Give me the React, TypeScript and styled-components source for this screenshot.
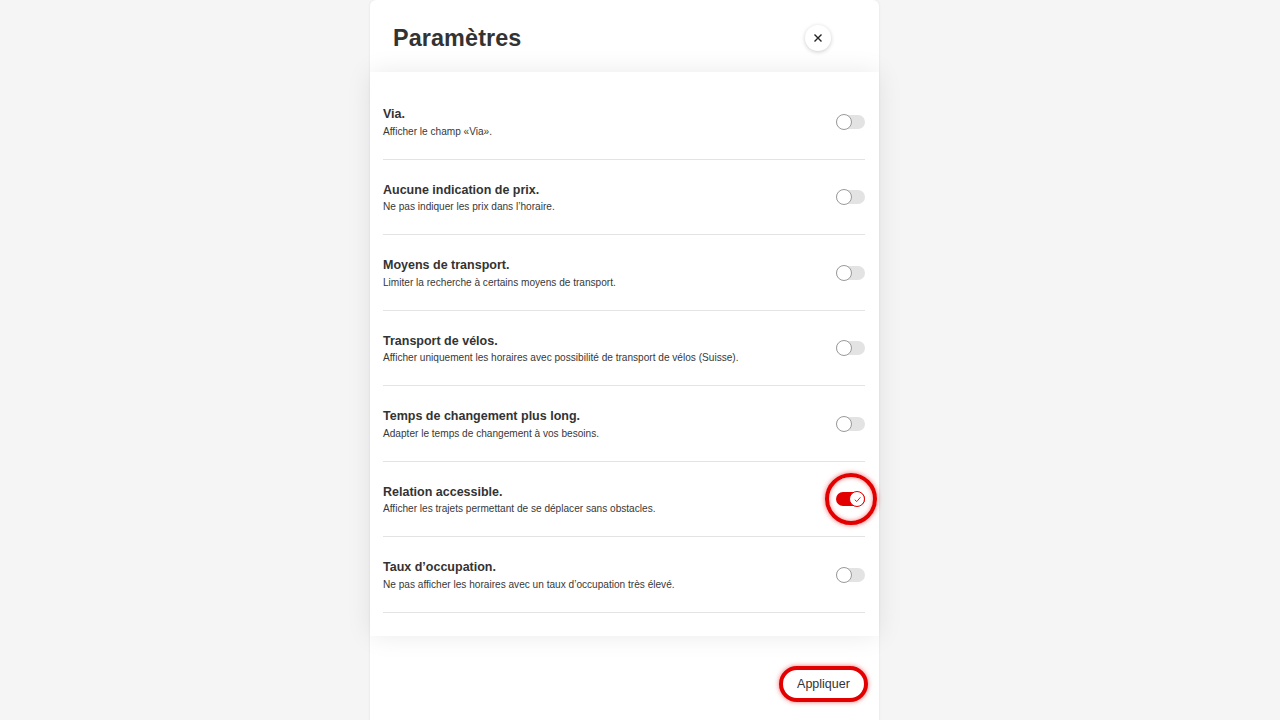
import React, { useState } from "react";
import styled, { createGlobalStyle } from "styled-components";

const GlobalStyle = createGlobalStyle`
  html, body {
    margin: 0;
    padding: 0;
    background: #f5f5f5;
    font-family: "Liberation Sans", Arial, sans-serif;
    color: #333;
  }
`;

const Page = styled.div`
  height: 720px;
  overflow: hidden;
  padding-left: 370px;
`;

const Modal = styled.div`
  width: 509px;
  height: 740px;
  background: #fff;
  border-radius: 6px;
  box-shadow: 0 0 3px rgba(0, 0, 0, 0.08);
  display: flex;
  flex-direction: column;
`;

const Header = styled.div`
  height: 72px;
  display: flex;
  align-items: center;
  justify-content: space-between;
  padding: 4px 48px 0 23px;
  box-sizing: border-box;
`;

const Title = styled.h1`
  margin: 0;
  font-size: 23.4px;
  font-weight: 700;
  color: #333;
  letter-spacing: 0.1px;
`;

const CloseButton = styled.button`
  width: 26px;
  height: 26px;
  border-radius: 50%;
  border: none;
  background: #fff;
  box-shadow: 0 1px 4px rgba(0, 0, 0, 0.2);
  display: flex;
  align-items: center;
  justify-content: center;
  padding: 0;
  cursor: pointer;
`;

const Body = styled.div`
  position: relative;
  z-index: 1;
  background: #fff;
  box-shadow: 0 0 24px rgba(0, 0, 0, 0.085);
  padding: 12px 14px 23px 13px;
  height: 564px;
  box-sizing: border-box;
`;

const Row = styled.div`
  display: flex;
  align-items: center;
  justify-content: space-between;
  padding: 22px 0 21px;
  border-bottom: 1px solid #e3e3e3;
`;

const Texts = styled.div`
  display: flex;
  flex-direction: column;
  gap: 3.5px;
`;

const RowTitle = styled.div`
  font-size: 12.5px;
  line-height: 16px;
  font-weight: 700;
  color: #333;
`;

const RowDesc = styled.div`
  font-size: 10.1px;
  line-height: 12px;
  color: #383838;
`;

const ToggleWrap = styled.div<{ $focus?: boolean }>`
  position: relative;
  width: 29px;
  height: 16px;
  flex-shrink: 0;
  cursor: pointer;

  ${(p) =>
    p.$focus &&
    `
    &::after {
      content: "";
      position: absolute;
      left: -11px;
      top: -18px;
      width: 44px;
      height: 44px;
      border-radius: 50%;
      border: 4px solid #e30000;
      box-shadow: 0 0 5px rgba(230, 0, 0, 0.6), inset 0 0 4px rgba(230, 0, 0, 0.5);
    }
  `}
`;

const Track = styled.div<{ $on: boolean }>`
  position: absolute;
  left: 0;
  top: 1px;
  width: 29px;
  height: 14px;
  border-radius: 7px;
  background: ${(p) => (p.$on ? "#e30000" : "#e3e3e3")};
`;

const Knob = styled.div<{ $on: boolean }>`
  position: absolute;
  top: 0;
  left: ${(p) => (p.$on ? "13px" : "0")};
  width: 16px;
  height: 16px;
  box-sizing: border-box;
  border-radius: 50%;
  background: #fff;
  border: 1px solid ${(p) => (p.$on ? "#e30000" : "#9a9a9a")};
  display: flex;
  align-items: center;
  justify-content: center;
`;

const Footer = styled.div`
  height: 84px;
  display: flex;
  align-items: center;
  justify-content: flex-end;
  padding: 11px 11px 0 0;
  box-sizing: border-box;
`;

const ApplyButton = styled.button`
  height: 36px;
  width: 89px;
  padding: 0;
  border-radius: 18px;
  background: #fff;
  border: 4px solid #e30000;
  box-shadow: 0 0 5px rgba(230, 0, 0, 0.55);
  font-family: "Liberation Sans", Arial, sans-serif;
  font-size: 12.5px;
  color: #333;
  cursor: pointer;
`;

const options = [
  { title: "Via.", desc: "Afficher le champ «Via».", on: false },
  {
    title: "Aucune indication de prix.",
    desc: "Ne pas indiquer les prix dans l’horaire.",
    on: false,
  },
  {
    title: "Moyens de transport.",
    desc: "Limiter la recherche à certains moyens de transport.",
    on: false,
  },
  {
    title: "Transport de vélos.",
    desc: "Afficher uniquement les horaires avec possibilité de transport de vélos (Suisse).",
    on: false,
  },
  {
    title: "Temps de changement plus long.",
    desc: "Adapter le temps de changement à vos besoins.",
    on: false,
  },
  {
    title: "Relation accessible.",
    desc: "Afficher les trajets permettant de se déplacer sans obstacles.",
    on: true,
  },
  {
    title: "Taux d’occupation.",
    desc: "Ne pas afficher les horaires avec un taux d’occupation très élevé.",
    on: false,
  },
];

const Toggle = ({
  on,
  focus,
  onClick,
}: {
  on: boolean;
  focus?: boolean;
  onClick: () => void;
}) => (
  <ToggleWrap $focus={focus} onClick={onClick}>
    <Track $on={on} />
    <Knob $on={on}>
      {on && (
        <svg width="9" height="9" viewBox="0 0 10 10">
          <path
            d="M2 5.3 L4.2 7.3 L8.2 2.6"
            fill="none"
            stroke="#e30000"
            strokeWidth="1"
          />
        </svg>
      )}
    </Knob>
  </ToggleWrap>
);

const App = () => {
  const [values, setValues] = useState(options.map((o) => o.on));

  const flip = (i: number) =>
    setValues((v) => v.map((x, j) => (j === i ? !x : x)));

  return (
    <Page>
      <GlobalStyle />
      <Modal>
        <Header>
          <Title>Paramètres</Title>
          <CloseButton aria-label="Fermer">
            <svg width="10" height="10" viewBox="0 0 10 10">
              <path
                d="M1.5 1.5 L8.5 8.5 M8.5 1.5 L1.5 8.5"
                stroke="#222"
                strokeWidth="1.4"
              />
            </svg>
          </CloseButton>
        </Header>
        <Body>
          {options.map((o, i) => (
            <Row key={o.title}>
              <Texts>
                <RowTitle>{o.title}</RowTitle>
                <RowDesc>{o.desc}</RowDesc>
              </Texts>
              <Toggle on={values[i]} focus={i === 5} onClick={() => flip(i)} />
            </Row>
          ))}
        </Body>
        <Footer>
          <ApplyButton>Appliquer</ApplyButton>
        </Footer>
      </Modal>
    </Page>
  );
};

export default App;
